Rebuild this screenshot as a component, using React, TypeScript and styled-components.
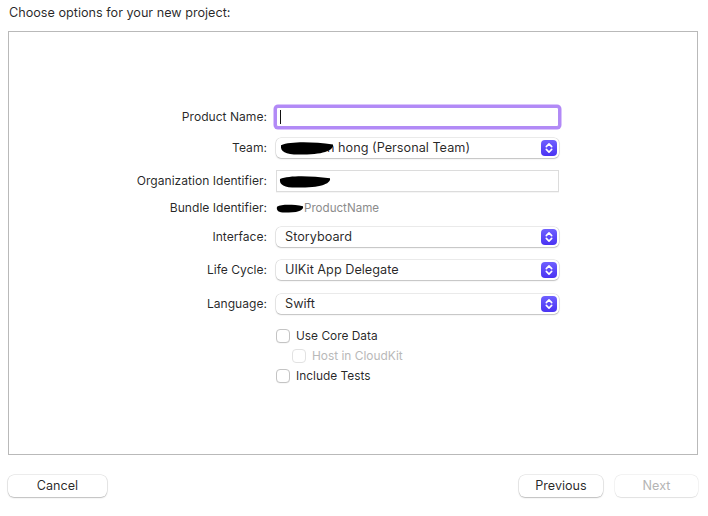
import React from "react";
import styled, { createGlobalStyle } from "styled-components";

const Global = createGlobalStyle`
  html, body { margin: 0; padding: 0; background: #ffffff; }
  body { font-family: Inter, "Noto Sans", "Liberation Sans", sans-serif; -webkit-font-smoothing: antialiased; }
  * { box-sizing: border-box; }
`;

const Window = styled.div`
  width: 708px;
  height: 516px;
  padding: 5px 10px 0 8px;
  display: flex;
  flex-direction: column;
  background: #ffffff;
  color: rgba(0, 0, 0, 0.85);
  font-size: 13px;
`;

const Title = styled.div`
  line-height: 16px;
  height: 16px;
  padding-left: 1px;
  font-size: 12.65px;
  color: rgba(0, 0, 0, 0.85);
`;

const Panel = styled.div`
  margin-top: 10px;
  height: 424px;
  border: 1px solid #b9b9b9;
  background: #ffffff;
  padding-top: 75px;
  display: flex;
  flex-direction: column;
`;

const Row = styled.div<{ $mt?: number; $h?: number }>`
  display: grid;
  grid-template-columns: 258px 283px;
  column-gap: 9px;
  align-items: center;
  margin-top: ${(p) => p.$mt ?? 0}px;
  height: ${(p) => p.$h ?? 20}px;
`;

const Label = styled.div`
  text-align: right;
  line-height: 16px;
  font-size: 12.1px;
  white-space: nowrap;
`;

const TextField = styled.div<{ $focused?: boolean; $h?: number }>`
  position: relative;
  height: ${(p) => p.$h ?? 22}px;
  background: #ffffff;
  border: 1px solid ${(p) => (p.$focused ? "#b18cf4" : "#dcdcdc")};
  box-shadow: ${(p) => (p.$focused ? "0 0 0 2.5px rgba(170, 124, 246, 0.9)" : "0 1px 0 rgba(0,0,0,0.04)")};
  border-radius: ${(p) => (p.$focused ? "2px" : "0")};
  display: flex;
  align-items: center;
  padding-left: 2px;
`;

const Caret = styled.span`
  width: 1px;
  height: 14px;
  background: #111;
  margin-left: 1px;
`;

const Popup = styled.div`
  height: 20px;
  background: #ffffff;
  border-radius: 5px;
  box-shadow: 0 0 0 0.5px rgba(0, 0, 0, 0.16), 0 1px 1.5px rgba(0, 0, 0, 0.18);
  display: flex;
  align-items: center;
  justify-content: space-between;
  padding: 0 2px 0 9px;
  line-height: 16px;
  font-size: 12.7px;
  white-space: nowrap;
`;

const PopupText = styled.span`
  display: inline-flex;
  align-items: center;
`;

const ArrowBox = styled.span`
  width: 16px;
  height: 16px;
  border-radius: 4px;
  background: linear-gradient(180deg, #6f60ff 0%, #4a33f3 100%);
  display: inline-flex;
  align-items: center;
  justify-content: center;
`;

const Value = styled.div<{ $muted?: boolean }>`
  display: flex;
  align-items: center;
  line-height: 16px;
  font-size: 11.6px;
  color: ${(p) => (p.$muted ? "#8c8c8c" : "inherit")};
`;

const Redact = styled.svg<{ $shift?: number }>`
  display: block;
  flex: none;
  position: relative;
  z-index: 1;
  margin-left: ${(p) => p.$shift ?? 0}px;
`;

const Overlap = styled.span`
  margin-left: -7px;
`;

const CheckRow = styled.label<{ $indent?: number; $disabled?: boolean }>`
  display: flex;
  align-items: center;
  gap: 6px;
  padding-left: ${(p) => p.$indent ?? 0}px;
  color: ${(p) => (p.$disabled ? "#b9b9b9" : "inherit")};
  line-height: 16px;
  font-size: 11.9px;
`;

const Box = styled.span<{ $disabled?: boolean }>`
  width: 14px;
  height: 14px;
  border-radius: 4px;
  background: #ffffff;
  border: 1px solid ${(p) => (p.$disabled ? "#e2e2e2" : "#c4c4c4")};
  box-shadow: ${(p) => (p.$disabled ? "none" : "0 0.5px 0.5px rgba(0,0,0,0.06)")};
  flex: none;
`;

const Footer = styled.div`
  margin-top: 20px;
  display: flex;
  justify-content: space-between;
  align-items: center;
`;

const ButtonGroup = styled.div`
  display: flex;
  gap: 12px;
`;

const Button = styled.button<{ $w: number; $disabled?: boolean }>`
  width: ${(p) => p.$w}px;
  height: 22px;
  padding: 0;
  font: inherit;
  font-size: 12.6px;
  color: ${(p) => (p.$disabled ? "#b4b4b4" : "rgba(0,0,0,0.85)")};
  background: #ffffff;
  border: none;
  border-radius: 6px;
  box-shadow: ${(p) =>
    p.$disabled
      ? "0 0 0 0.5px rgba(0,0,0,0.08), 0 0.5px 1px rgba(0,0,0,0.08)"
      : "0 0 0 0.5px rgba(0,0,0,0.14), 0 1px 1.5px rgba(0,0,0,0.2)"};
  line-height: 22px;
  text-align: center;
`;

const Chevrons = () => (
  <svg width="10" height="12" viewBox="0 0 10 12" fill="none">
    <path d="M2.3 4.6 L5 1.9 L7.7 4.6" stroke="#fff" strokeWidth="1.6" strokeLinecap="round" strokeLinejoin="round" />
    <path d="M2.3 7.4 L5 10.1 L7.7 7.4" stroke="#fff" strokeWidth="1.6" strokeLinecap="round" strokeLinejoin="round" />
  </svg>
);

const Blob = ({ w, h, shift }: { w: number; h: number; shift?: number }) => (
  <Redact width={w} height={h} viewBox={`0 0 ${w} ${h}`} $shift={shift}>
    <path
      d={`M1 ${h * 0.3} C ${w * 0.2} ${h * 0.02}, ${w * 0.6} ${h * 0.05}, ${w - 1} ${h * 0.25} C ${w} ${h * 0.6}, ${w * 0.85} ${h * 0.98}, ${w * 0.4} ${h - 0.5} C ${w * 0.12} ${h}, 0 ${h * 0.8}, 1 ${h * 0.3} Z`}
      fill="#000"
    />
  </Redact>
);

const PopupField = ({ children }: { children: React.ReactNode }) => (
  <Popup>
    <PopupText>{children}</PopupText>
    <ArrowBox>
      <Chevrons />
    </ArrowBox>
  </Popup>
);

export default function App() {
  return (
    <Window>
      <Global />
      <Title>Choose options for your new project:</Title>
      <Panel>
        <Row $h={20}>
          <Label>Product Name:</Label>
          <TextField $focused $h={20}>
            <Caret />
          </TextField>
        </Row>
        <Row $mt={11}>
          <Label>Team:</Label>
          <PopupField>
            <Blob w={54} h={14} shift={-5} />
            <Overlap>n hong (Personal Team)</Overlap>
          </PopupField>
        </Row>
        <Row $mt={12} $h={22}>
          <Label>Organization Identifier:</Label>
          <TextField>
            <Blob w={52} h={13} />
          </TextField>
        </Row>
        <Row $mt={8} $h={16}>
          <Label>Bundle Identifier:</Label>
          <Value $muted>
            <Blob w={28} h={9} />
            ProductName
          </Value>
        </Row>
        <Row $mt={11}>
          <Label>Interface:</Label>
          <PopupField>Storyboard</PopupField>
        </Row>
        <Row $mt={13}>
          <Label>Life Cycle:</Label>
          <PopupField>UIKit App Delegate</PopupField>
        </Row>
        <Row $mt={14}>
          <Label>Language:</Label>
          <PopupField>Swift</PopupField>
        </Row>
        <Row $mt={14} $h={16}>
          <span />
          <CheckRow>
            <Box />
            Use Core Data
          </CheckRow>
        </Row>
        <Row $mt={4} $h={16}>
          <span />
          <CheckRow $indent={16} $disabled>
            <Box $disabled />
            Host in CloudKit
          </CheckRow>
        </Row>
        <Row $mt={4} $h={16}>
          <span />
          <CheckRow>
            <Box />
            Include Tests
          </CheckRow>
        </Row>
      </Panel>
      <Footer>
        <Button $w={99}>Cancel</Button>
        <ButtonGroup>
          <Button $w={84}>Previous</Button>
          <Button $w={83} $disabled>
            Next
          </Button>
        </ButtonGroup>
      </Footer>
    </Window>
  );
}
